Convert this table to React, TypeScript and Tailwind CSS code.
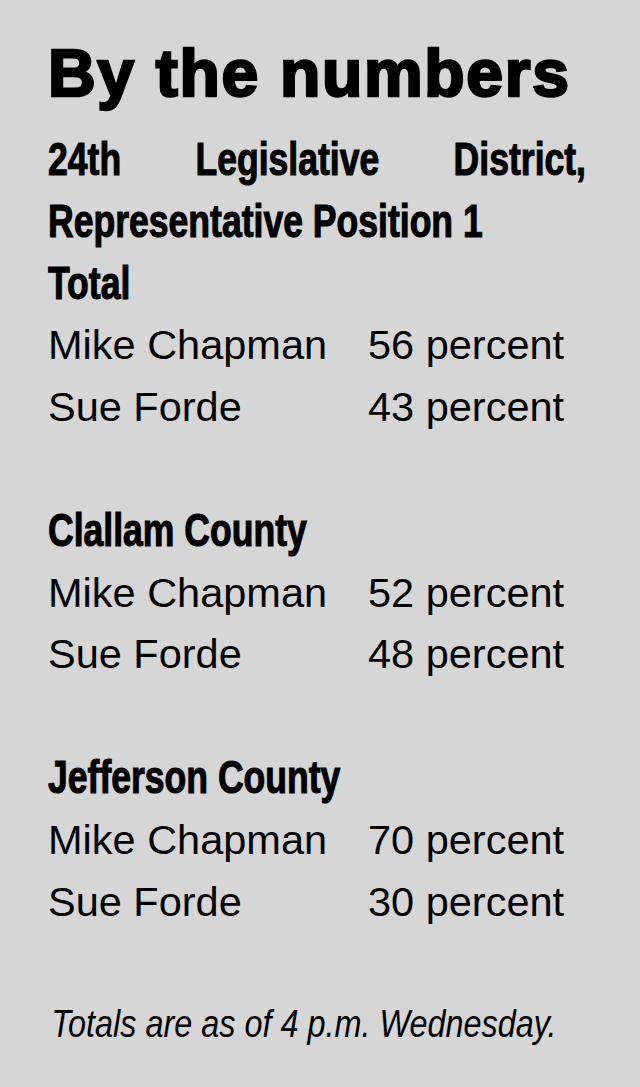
const rows = [
  {
    heading: "Clallam County",
    results: [
      { name: "Mike Chapman", value: "52 percent" },
      { name: "Sue Forde", value: "48 percent" },
    ],
  },
  {
    heading: "Jefferson County",
    results: [
      { name: "Mike Chapman", value: "70 percent" },
      { name: "Sue Forde", value: "30 percent" },
    ],
  },
];

// no condensed face installed, so squeeze Liberation Sans horizontally
const condensed =
  "font-['Liberation_Sans',Arial,sans-serif] font-bold text-[46px] leading-[61.8px] origin-left scale-x-[0.773] [-webkit-text-stroke:1.1px_black]";

const ResultRows = ({ results }: { results: { name: string; value: string }[] }) => (
  <div className="grid grid-cols-[320px_1fr] text-[41.5px] leading-[61.8px] font-['Liberation_Sans',Arial,sans-serif]">
    {results.map((r) => (
      <div key={r.name} className="contents">
        <span>{r.name}</span>
        <span>{r.value}</span>
      </div>
    ))}
  </div>
);

const SubHead = ({ children }: { children: React.ReactNode }) => (
  <h3 className={`${condensed} w-[696px]`}>{children}</h3>
);

export default function App() {
  return (
    <div className="w-full h-[1087px] bg-[#d6d6d6] text-black pt-[33px] pl-12 overflow-hidden">
      <h1 className="font-['Liberation_Sans',Arial,sans-serif] font-black text-[66px] leading-[80px] tracking-[1.7px] mb-4 [-webkit-text-stroke:2.6px_black]">
        By the numbers
      </h1>

      <h2 className={`${condensed} w-[696px] text-justify`}>
        24th Legislative District, Representative Position 1
      </h2>
      <SubHead>Total</SubHead>
      <ResultRows
        results={[
          { name: "Mike Chapman", value: "56 percent" },
          { name: "Sue Forde", value: "43 percent" },
        ]}
      />

      {rows.map((section) => (
        <div key={section.heading} className="mt-[61.8px]">
          <SubHead>{section.heading}</SubHead>
          <ResultRows results={section.results} />
        </div>
      ))}

      <p className="font-['Liberation_Sans',Arial,sans-serif] italic text-[39.5px] leading-[58px] mt-[61.8px] pl-1 w-[700px] origin-left scale-x-[0.82]">
        Totals are as of 4 p.m. Wednesday.
      </p>
    </div>
  );
}
